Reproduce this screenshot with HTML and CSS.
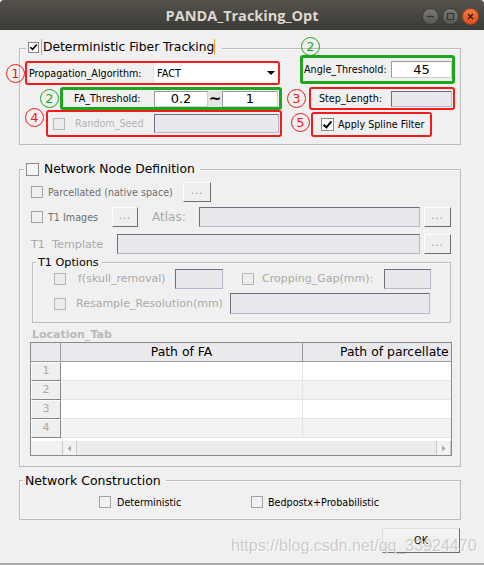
FILE: index.html
```html
<!DOCTYPE html>
<html>
<head>
<meta charset="utf-8">
<title>PANDA_Tracking_Opt</title>
<link rel="stylesheet" href="styles.css">
</head>
<body>
<div class="window">
  <header class="titlebar">
    <span></span>
    <span class="title">PANDA_Tracking_Opt</span>
    <div class="winbtns">
      <span class="wb wb-grey"><svg width="15" height="15" viewBox="0 0 15 15"><path d="M4 7.5h7" stroke="#35342f" stroke-width="1.3"/></svg></span>
      <span class="wb wb-grey"><svg width="15" height="15" viewBox="0 0 15 15"><rect x="4.5" y="4.5" width="6" height="6" fill="none" stroke="#35342f" stroke-width="1.1"/></svg></span>
      <span class="wb wb-close"><svg width="15" height="15" viewBox="0 0 15 15"><path d="M5 5l5 5M10 5l-5 5" stroke="#3b1606" stroke-width="1.3"/></svg></span>
    </div>
  </header>

  <main class="content">
    <section class="group g1">
      <div class="legend l1">
        <span class="cb cb-on"><svg width="10" height="10" viewBox="0 0 10 10"><path d="M1.5 5.2L4 7.6L8.6 2.2" fill="none" stroke="#000" stroke-width="1.7"/></svg></span>
        <span class="caret">Deterministic Fiber Tracking</span>
      </div>
      <span class="num green n2a">2</span>

      <div class="row ra">
        <span class="num red n1">1</span>
        <div class="mark redbox ma1">
          <span class="lbl grow">Propagation_Algorithm:</span>
          <div class="combo">FACT<span class="arrow"></span></div>
        </div>
        <div class="mark greenbox ma2">
          <span class="lbl">Angle_Threshold:</span>
          <div class="field white fa2">45</div>
        </div>
      </div>

      <div class="row rb">
        <span class="num green n2b">2</span>
        <div class="mark greenbox mb1">
          <span class="lbl mb1-lbl">FA_Threshold:</span>
          <div class="field white v1">0.2</div>
          <span class="tilde">~</span>
          <div class="field white v2">1</div>
        </div>
        <span class="num red n3">3</span>
        <div class="mark redbox mb2">
          <span class="lbl mb2-lbl">Step_Length:</span>
          <div class="field dis fs">&nbsp;</div>
        </div>
      </div>

      <div class="row rc">
        <span class="num red n4">4</span>
        <div class="mark redbox mc1">
          <span class="cb cb-dis mc1-cb"></span>
          <span class="lbl grow faint mc1-lbl">Random_Seed</span>
          <div class="field dis fr">&nbsp;</div>
        </div>
        <span class="num red n5">5</span>
        <div class="mark redbox mc2">
          <span class="cb cb-on mc2-cb"><svg width="11" height="11" viewBox="0 0 10 10"><path d="M1.5 5.2L4 7.6L8.6 2.2" fill="none" stroke="#000" stroke-width="1.7"/></svg></span>
          <span class="lbl mc2-lbl">Apply Spline Filter</span>
        </div>
      </div>
    </section>

    <section class="group g2">
      <div class="legend l2">
        <span class="cb cb13"></span>
        <span class="ltext l2-text">Network Node Definition</span>
      </div>

      <div class="row nr1">
        <span class="cb cb-g ind"></span>
        <span class="lbl mid w135">Parcellated (native space)</span>
        <span class="dots d28">...</span>
      </div>

      <div class="row nr2">
        <span class="cb cb-g ind"></span>
        <span class="lbl mid w64">T1 Images</span>
        <span class="dots d26">...</span>
        <span class="atlas">Atlas:</span>
        <div class="field dis f221">&nbsp;</div>
        <span class="dots d27">...</span>
      </div>

      <div class="row nr3">
        <span class="t1tpl">T1&nbsp;&nbsp;Template</span>
        <div class="field dis f303">&nbsp;</div>
        <span class="dots d27">...</span>
      </div>

      <section class="group sub">
        <div class="legend l3"><span class="ltext sub-text">T1 Options</span></div>
        <div class="row sr1">
          <span class="cb cb-dis sc1"></span>
          <span class="opt w97 ml12">f(skull_removal)</span>
          <div class="field dis f48">&nbsp;</div>
          <span class="cb cb-dis sc2"></span>
          <span class="opt w122 ml8">Cropping_Gap(mm):</span>
          <div class="field dis f47">&nbsp;</div>
        </div>
        <div class="row sr2">
          <span class="cb cb-dis sc1"></span>
          <span class="opt w154 ml10">Resample_Resolution(mm)</span>
          <div class="field dis f200">&nbsp;</div>
        </div>
      </section>

      <div class="loctab">Location_Tab</div>

      <div class="table">
        <div class="thead">
          <span class="corner"></span>
          <span class="th">Path of FA</span>
          <span class="th th2">Path of parcellate</span>
        </div>
        <div class="tr"><span class="rh">1</span><span class="td"></span><span class="td td-last"></span></div>
        <div class="tr alt"><span class="rh">2</span><span class="td"></span><span class="td td-last"></span></div>
        <div class="tr"><span class="rh">3</span><span class="td"></span><span class="td td-last"></span></div>
        <div class="tr alt"><span class="rh">4</span><span class="td"></span><span class="td td-last"></span></div>
        <div class="tfill"></div>
        <div class="hscroll">
          <span class="sb-pad"></span>
          <span class="sb-btn"><svg width="13" height="13" viewBox="0 0 13 13"><path d="M8 3.5L4.5 6.5L8 9.5z" fill="#a9a9a9"/></svg></span>
          <span class="sb-track"></span>
          <span class="sb-btn"><svg width="13" height="13" viewBox="0 0 13 13"><path d="M5 3.5L8.5 6.5L5 9.5z" fill="#a9a9a9"/></svg></span>
        </div>
      </div>
    </section>

    <section class="group g3">
      <div class="legend l4"><span class="ltext">Network Construction</span></div>
      <div class="row cr">
        <span class="cb cb-g c1"></span>
        <span class="lbl w134 ml6">Deterministic</span>
        <span class="cb cb-g"></span>
        <span class="lbl ml5">Bedpostx+Probabilistic</span>
      </div>
    </section>

    <div class="footer">
      <button class="ok">OK</button>
    </div>
  </main>

  <div class="watermark">https://blog.csdn.net/qq_33924470</div>
  <div class="strip"></div>
</div>
</body>
</html>
```

FILE: styles.css
```css
* { box-sizing: border-box; }
html, body { margin: 0; padding: 0; }
body {
  width: 484px;
  height: 565px;
  overflow: hidden;
  background: #f0f0f0;
  font-family: "DejaVu Sans", "Liberation Sans", sans-serif;
  color: #000;
}
.window {
  position: relative;
  height: 565px;
  display: flex;
  flex-direction: column;
}

/* title bar */
.titlebar {
  height: 30px;
  flex: none;
  background: linear-gradient(#55524c, #3c3b37);
  display: grid;
  grid-template-columns: 1fr auto 1fr;
  align-items: center;
  border-radius: 4px 4px 0 0;
}
.title {
  font-family: "Open Sans", "DejaVu Sans", sans-serif;
  font-weight: 700;
  font-size: 14.5px;
  color: #dcd8cf;
  padding-top: 1px;
}
.winbtns {
  justify-self: end;
  display: flex;
  gap: 3px;
  padding-right: 5px;
  padding-top: 2px;
}
.wb {
  width: 17px;
  height: 17px;
  border-radius: 50%;
  display: flex;
  align-items: center;
  justify-content: center;
}
.wb-grey {
  background: linear-gradient(#7b7974, #5a5853);
  border: 1px solid #3a3935;
}
.wb-close {
  background: linear-gradient(#f5784a, #e1501c);
  border: 1px solid #a8400f;
}

/* content */
.content { display: block; }
.group {
  position: relative;
  display: flex;
  flex-direction: column;
  align-items: flex-start;
  border: 1px solid #bcbcbc;
  box-shadow: inset 1px 1px 0 #fafafa;
}
.g1 { margin: 18px 0 0 19px; width: 442px; padding-bottom: 7px; }
.g2 { margin: 24px 0 0 19px; width: 442px; padding-bottom: 10px; }
.g3 { margin: 13px 0 0 19px; width: 442px; padding-bottom: 11px; }

.legend {
  display: flex;
  align-items: center;
  background: #f0f0f0;
  font-size: 12.3px;
  white-space: nowrap;
}
.l1 { height: 16px; margin: -10px 0 0 6px; padding: 0 7px 0 2px; }
.l2 { height: 16px; margin: -9px 0 0 4px; padding: 0 5px 0 2px; }
.l3 { height: 12px; margin: -7px 0 0 3px; padding: 0 3px 0 2px; }
.l4 { height: 16px; margin: -9px 0 0 3px; padding: 0 5px 0 2px; font-size: 12.5px; }
.caret {
  margin-left: 2px;
  height: 16px;
  line-height: 16px;
  padding-left: 1px;
  border-left: 1px solid #f0a23c;
  border-right: 1px solid #f0a23c;
}
.l2-text { margin-left: 5px; }
.sub-text { font-size: 11.2px; }

.row { display: flex; align-items: center; flex: none; }

/* checkboxes */
.cb {
  width: 12px;
  height: 12px;
  flex: none;
  border: 1px solid #8e8e8e;
  background: #f7f7f7;
  display: flex;
  align-items: center;
  justify-content: center;
}
.cb-on { width: 11px; height: 11px; background: #fbfbfb; border-color: #8a8a8a; }
.cb13 { width: 13px; height: 13px; border-color: #8c8c8c; background: #f4f4f4; }
.cb-g { border-color: #a2a2a2; background: #f1f1f1; }
.cb-dis { border-color: #b6b6b6; background: #ececec; }

/* annotation marks */
.num {
  width: 19px;
  height: 19px;
  flex: none;
  border-radius: 50%;
  border: 1px solid currentColor;
  display: flex;
  align-items: center;
  justify-content: center;
  font-size: 13px;
  line-height: 1;
  font-family: "DejaVu Sans", sans-serif;
}
.num.red { color: #f21a1a; }
.num.green { color: #1ea81e; }
.n2a { position: absolute; left: 281px; top: -12px; }

.mark { display: flex; align-items: center; flex: none; border-radius: 3px; }
.redbox { border: 2px solid #f21c1c; }
.greenbox { border: 3px solid #1fa61f; }

.lbl { font-size: 9.6px; white-space: nowrap; flex: none; }
.grow { flex: 1; }
.faint { color: #b3b3b3; }
.mid { color: #6e6e6e; }

/* fields */
.field {
  flex: none;
  border: 1px solid;
  display: flex;
  align-items: center;
  justify-content: center;
  font-size: 13px;
}
.field.white {
  background: #fff;
  border-color: #9a9a9a #cfcfcf #cfcfcf #9a9a9a;
}
.field.dis {
  background: #e9e8ed;
  border-color: #6f6f7d #b3b8cc #b3b8cc #6f6f7d;
}

.combo {
  width: 125px;
  height: 20px;
  flex: none;
  background: #fff;
  border-left: 1px solid #e6e6e6;
  display: flex;
  align-items: center;
  padding-left: 3px;
  font-size: 9.8px;
}
.arrow {
  margin-left: auto;
  margin-right: 3px;
  width: 0;
  height: 0;
  border-left: 4px solid transparent;
  border-right: 4px solid transparent;
  border-top: 4px solid #000;
}

/* group 1 rows */
.ra { height: 30px; margin-left: -14px; align-items: stretch; }
.n1 { align-self: flex-end; margin-bottom: 2px; }
.ma1 { width: 255px; height: 24px; align-self: flex-end; }
.ma1 .lbl { padding-left: 2px; }
.ma2 { margin-left: 20px; width: 155px; height: 29px; align-self: flex-start; justify-content: space-between; }
.ma2 .lbl { padding-left: 1px; }
.fa2 { width: 61px; height: 17px; }

.rb { height: 23px; margin: 2px 0 0 -14px; }
.n2b { margin-left: 34px; }
.mb1 { margin-left: 1px; width: 222px; height: 23px; }
.mb1-lbl { width: 91px; padding-left: 11px; }
.v1 { width: 54px; height: 16px; }
.v2 { width: 56px; height: 16px; }
.tilde {
  width: 14px;
  height: 16px;
  flex: none;
  background: #e4e4e4;
  font-size: 15px;
  font-weight: 700;
  line-height: 16px;
  text-align: center;
}
.n3 { margin-left: 5px; }
.mb2 { margin-left: 3px; width: 146px; height: 23px; }
.mb2-lbl { width: 80px; padding-left: 8px; }
.fs { width: 61px; height: 16px; }

.rc { height: 27px; margin-left: -14px; }
.n4 { margin-left: 19px; align-self: flex-start; margin-top: -2px; }
.mc1 { margin-left: 2px; width: 236px; height: 27px; }
.mc1-cb { margin-left: 5px; }
.mc1-lbl { margin-left: 10px; }
.fr { width: 125px; height: 19px; margin-right: 1px; }
.n5 { margin-left: 9px; align-self: flex-start; margin-top: 3px; }
.mc2 { margin-left: 1px; width: 121px; height: 25px; align-self: flex-end; }
.mc2-cb { margin-left: 8px; width: 13px; height: 13px; }
.mc2-lbl { margin-left: 4px; }

/* group 2 rows */
.ind { margin-left: 11px; }
.w135 { width: 135px; margin-left: 5px; }
.w64 { width: 64px; margin-left: 5px; }
.dots {
  flex: none;
  height: 20px;
  background: #efefef;
  border: 1px solid;
  border-color: #fdfdfd #6c6c6c #6c6c6c #fdfdfd;
  display: flex;
  align-items: center;
  justify-content: center;
  font-size: 10px;
  letter-spacing: 1px;
  color: #9a8ea0;
  padding-bottom: 3px;
}
.d26 { width: 26px; }
.d27 { width: 27px; margin-left: 4px; }
.d28 { width: 28px; }
.nr1 { margin-top: 5px; height: 20px; }
.nr2 { margin-top: 5px; height: 20px; }
.nr3 { margin-top: 7px; height: 20px; }
.atlas {
  margin-left: 14px;
  width: 47px;
  flex: none;
  font-size: 12px;
  color: #a9a9a9;
}
.f221 { width: 221px; height: 20px; }
.t1tpl {
  margin-left: 11px;
  width: 86px;
  flex: none;
  font-size: 11.2px;
  color: #a9a9a9;
  white-space: nowrap;
}
.f303 { width: 303px; height: 20px; }

.sub { margin: 8px 0 0 12px; width: 419px; padding-bottom: 8px; }
.sr1 { height: 21px; }
.sr2 { height: 21px; margin-top: 4px; }
.sc1 { margin-left: 21px; }
.sc2 { margin-left: 19px; }
.opt { font-size: 11px; color: #a9a9a9; white-space: nowrap; flex: none; }
.ml12 { margin-left: 12px; }
.ml10 { margin-left: 10px; }
.ml8 { margin-left: 8px; }
.ml6 { margin-left: 6px; }
.ml5 { margin-left: 5px; }
.w97 { width: 97px; }
.w122 { width: 122px; }
.w154 { width: 154px; }
.w134 { width: 134px; }
.f48 { width: 48px; height: 20px; }
.f47 { width: 47px; height: 20px; }
.f200 { width: 200px; height: 21px; }

.loctab {
  margin: 5px 0 0 12px;
  height: 14px;
  line-height: 14px;
  font-size: 11px;
  font-weight: 700;
  color: #b9b9b9;
}

/* table */
.table {
  margin-left: 10px;
  width: 422px;
  height: 114px;
  border: 1px solid #8a8a8a;
  background: #fff;
  display: flex;
  flex-direction: column;
  flex: none;
  overflow: hidden;
}
.thead, .tr {
  display: grid;
  grid-template-columns: 30px 242px 1fr;
  height: 19px;
  flex: none;
}
.thead { background: #eae9ee; border-bottom: 1px solid #9a9a9a; }
.corner { border-right: 1px solid #9a9a9a; }
.th {
  border-right: 1px solid #9a9a9a;
  font-size: 12.4px;
  line-height: 18px;
  text-align: center;
  white-space: nowrap;
  overflow: hidden;
}
.th2 { text-align: left; padding-left: 37px; border-right: none; }
.tr { background: #fff; }
.tr.alt { background: #f3f3f3; }
.rh {
  background: #efefef;
  border-right: 1px solid #878787;
  border-bottom: 1px solid #878787;
  border-top: 1px solid #fbfbfb;
  border-left: 1px solid #fbfbfb;
  font-size: 11px;
  color: #ababab;
  text-align: center;
  line-height: 16px;
}
.td { border-right: 1px solid #e4e4e4; border-bottom: 1px solid #e4e4e4; }
.td-last { border-right: none; }
.tfill { height: 3px; flex: none; }
.hscroll {
  height: 14px;
  flex: none;
  display: flex;
  background: #f0f0f0;
}
.sb-pad { width: 31px; flex: none; }
.sb-btn {
  width: 15px;
  flex: none;
  border-left: 1px solid #c8c8c8;
  border-right: 1px solid #c8c8c8;
  background: #f2f2f2;
  display: flex;
  align-items: center;
  justify-content: center;
}
.sb-track { flex: 1; background: #ededed; }

/* group 3 */
.cr { margin-top: 8px; height: 12px; }
.c1 { margin-left: 79px; }

/* footer */
.footer { display: flex; }
.ok {
  margin: 8px 0 0 382px;
  width: 78px;
  height: 25px;
  background: linear-gradient(#f4f4f4, #ececec);
  border: 1px solid;
  border-color: #e0e0e0 #6e6e6e #6e6e6e #e0e0e0;
  font-family: "DejaVu Sans", sans-serif;
  font-size: 9.6px;
  color: #000;
  padding: 0;
}

.watermark {
  position: absolute;
  left: 231px;
  top: 537px;
  font-family: "Liberation Sans", Arial, sans-serif;
  font-size: 16px;
  color: rgba(190, 190, 190, 0.75);
  text-shadow: 1px 1px 0 rgba(255, 255, 255, 0.7);
  white-space: nowrap;
}
.strip {
  margin-top: auto;
  height: 2px;
  flex: none;
  background: #a8a8a8;
}
```
